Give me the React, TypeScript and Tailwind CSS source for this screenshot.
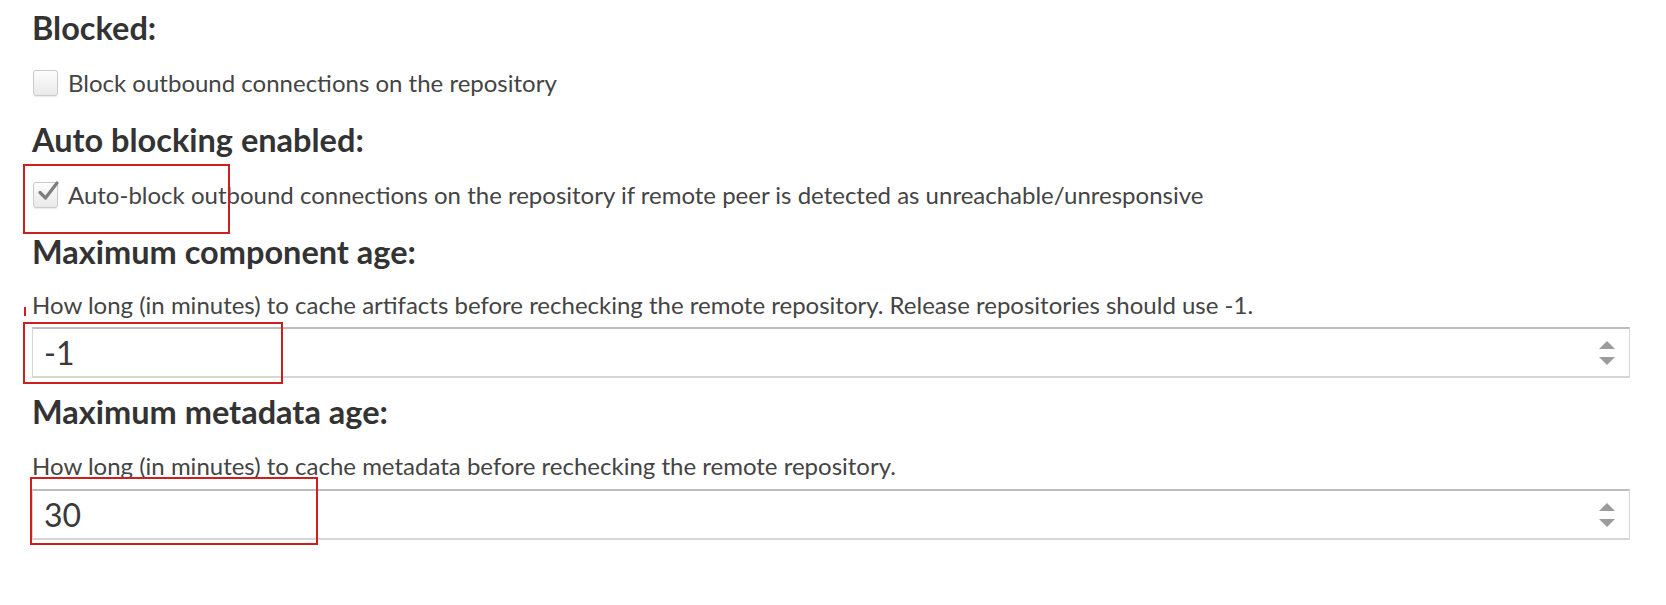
import { ChangeEvent, useState } from "react";

function Checkbox({ checked }: { checked: boolean }) {
  return (
    <span className="relative ml-px h-[26px] w-[25px] shrink-0 rounded-[3px] border border-[#cacaca] bg-gradient-to-b from-[#fdfdfd] to-[#e9e9e9] shadow-[inset_0_1px_1px_rgba(255,255,255,0.8),0_1px_1px_rgba(0,0,0,0.08)]">
      {checked && (
        <svg viewBox="0 0 24 24" className="absolute -top-[5px] left-[2px] h-[26px] w-[24px]">
          <path d="M4 13.5 L9.5 19 L21 4" fill="none" stroke="#7e7e7e" strokeWidth="3.2" strokeLinecap="round" strokeLinejoin="round" />
        </svg>
      )}
    </span>
  );
}

function NumberField({ value }: { value: string }) {
  const [v, setV] = useState(value);
  return (
    <div className="flex h-[51px] w-full items-center border border-t-2 border-b-2 border-[#d6d6d6] border-t-[#bdbdbd] bg-white">
      <input
        value={v}
        onChange={(e: ChangeEvent<HTMLInputElement>) => setV(e.target.value)}
        className="h-full flex-1 bg-transparent pl-[11px] text-[32px] text-[#3a3a3a] outline-none"
      />
      <div className="mr-[14px] flex flex-col items-center gap-[8px]">
        <svg width="16" height="8" viewBox="0 0 16 8">
          <path d="M8 0 L16 8 L0 8 Z" fill="#9c9c9c" />
        </svg>
        <svg width="16" height="8" viewBox="0 0 16 8">
          <path d="M0 0 L16 0 L8 8 Z" fill="#9c9c9c" />
        </svg>
      </div>
    </div>
  );
}

export default function App() {
  return (
    <div
      className="relative h-[605px] w-full overflow-hidden bg-white pl-[32px] pr-[36px] text-[#444]"
      style={{ fontFamily: "Lato, 'Liberation Sans', sans-serif" }}
    >
      <div className="flex h-[56px] items-center text-[32.5px] font-bold text-[#333]">Blocked:</div>
      <label className="mt-[14px] flex h-[26px] items-center gap-[10px] text-[24px]">
        <Checkbox checked={false} />
        <span>Block outbound connections on the repository</span>
      </label>

      <div className="mt-[24px] flex h-[40px] items-center text-[32.5px] font-bold text-[#333]">Auto blocking enabled:</div>
      <label className="mt-[22px] flex h-[26px] items-center gap-[10px] text-[24px]">
        <Checkbox checked />
        <span>Auto-block outbound connections on the repository if remote peer is detected as unreachable/unresponsive</span>
      </label>

      <div className="mt-[24px] flex h-[40px] items-center text-[32.5px] font-bold text-[#333]">Maximum component age:</div>
      <div className="mt-[19px] flex h-[28px] items-center text-[24px]">
        How long (in minutes) to cache artifacts before rechecking the remote repository. Release repositories should use -1.
      </div>
      <div className="mt-[8px]">
        <NumberField value="-1" />
      </div>

      <div className="mt-[14px] flex h-[40px] items-center text-[32.5px] font-bold text-[#333]">Maximum metadata age:</div>
      <div className="mt-[20px] flex h-[28px] items-center text-[24px]">
        How long (in minutes) to cache metadata before rechecking the remote repository.
      </div>
      <div className="mt-[9px]">
        <NumberField value="30" />
      </div>

      {/* red annotation boxes */}
      <div className="pointer-events-none absolute left-[23px] top-[164px] h-[70px] w-[207px] border-2 border-[#cc1f1f]" />
      <div className="pointer-events-none absolute left-[24px] top-[307px] h-[9px] w-[2px] bg-[#cc1f1f]" />
      <div className="pointer-events-none absolute left-[23px] top-[322px] h-[62px] w-[260px] border-2 border-[#cc1f1f]" />
      <div className="pointer-events-none absolute left-[30px] top-[477px] h-[68px] w-[288px] border-2 border-[#cc1f1f]" />
    </div>
  );
}
